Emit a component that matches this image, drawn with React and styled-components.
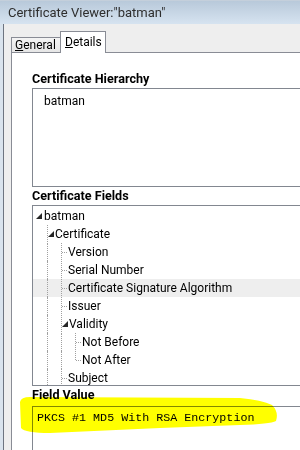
import React from "react";
import styled, { createGlobalStyle } from "styled-components";

const GlobalStyle = createGlobalStyle`
  html, body {
    margin: 0;
    padding: 0;
  }
  body {
    width: 300px;
    height: 450px;
    overflow: hidden;
    background: #eeeeee;
    font-family: Roboto, "Liberation Sans", sans-serif;
    color: #000;
  }
`;

const Window = styled.div`
  position: relative;
  width: 300px;
  height: 450px;
  overflow: hidden;
  display: flex;
  flex-direction: column;
`;

const TitleBar = styled.div`
  height: 23px;
  border-top: 1px solid #c4cfdb;
  background: linear-gradient(#b8c9da, #d6e3f0);
  padding-left: 8px;
  display: flex;
  align-items: center;
  font-size: 13px;
  color: #2e2e2e;
  white-space: nowrap;
`;

const Frame = styled.div`
  flex: 1;
  display: flex;
  background: #d9e3ed;
  padding-left: 3px;
`;

const Body = styled.div`
  flex: 1;
  display: flex;
  flex-direction: column;
  background: #eeeeee;
  border-left: 1px solid #6d7480;
  padding: 7px 0 0 7px;
`;

const TabRow = styled.div`
  display: flex;
  align-items: flex-end;
  height: 22px;
  margin-bottom: -1px;
  position: relative;
  z-index: 1;
`;

const Tab = styled.div`
  box-sizing: border-box;
  height: ${(p) => (p.$active ? 22 : 15)}px;
  margin-bottom: ${(p) => (p.$active ? 0 : 1)}px;
  margin-left: ${(p) => (p.$active ? -1 : 0)}px;
  width: ${(p) => p.$width}px;
  border: 1px solid #898c95;
  border-bottom: none;
  background: ${(p) =>
    p.$active ? "#ffffff" : "linear-gradient(#f4f4f4, #e6e6e6)"};
  padding-left: ${(p) => (p.$active ? 4 : 3)}px;
  font-size: 12px;
  line-height: ${(p) => (p.$active ? 21 : 15)}px;
  white-space: nowrap;
`;

const Panel = styled.div`
  flex: 1;
  width: 320px;
  background: #ffffff;
  border-top: 1px solid #898c95;
  border-left: 1px solid #898c95;
  padding: 17px 0 0 20px;
  display: flex;
  flex-direction: column;
`;

const Heading = styled.div`
  height: 18px;
  line-height: 18px;
  font-size: 12.6px;
  font-weight: 700;
  white-space: nowrap;
`;

const ListBox = styled.div`
  width: 300px;
  height: ${(p) => p.$height}px;
  border: 1px solid #828790;
  border-right: none;
  overflow: hidden;
  padding-top: ${(p) => p.$padTop || 0}px;
`;

const PlainItem = styled.div`
  padding-left: 11px;
  font-size: 12px;
  line-height: 18px;
`;

const TreeRow = styled.div`
  display: flex;
  align-items: center;
  height: 18px;
  padding-left: ${(p) => (p.$level === 0 ? 3 : 14)}px;
  background: ${(p) => (p.$selected ? "#eeeeee" : "transparent")};
  font-size: 12px;
  white-space: nowrap;
`;

const Guide = styled.div`
  width: 13px;
  height: 18px;
  border-left: 1px dotted #a0a0a0;
`;

const Label = styled.span`
  line-height: 18px;
`;

const ValueBox = styled.div`
  flex: 1;
  width: 300px;
  margin-top: 2px;
  border-top: 1px solid #828790;
  border-left: 1px solid #828790;
  padding: 2px 0 0 4px;
  font-family: "Liberation Mono", "Courier New", monospace;
  font-size: 11.7px;
  line-height: 18px;
  white-space: nowrap;
`;

const Highlighter = styled.svg`
  position: absolute;
  left: 0;
  top: 390px;
  width: 300px;
  height: 50px;
  mix-blend-mode: multiply;
  pointer-events: none;
`;

const Connector = ({ leaf, open, last, root }) => (
  <svg width={leaf ? 7 : 8} height="18" style={{ flexShrink: 0 }}>
    {!root && (
      <line
        x1="0.5"
        y1="0"
        x2="0.5"
        y2={last ? 9.5 : 18}
        stroke="#a0a0a0"
        strokeDasharray="1 1"
      />
    )}
    {leaf && (
      <line
        x1="1"
        y1="9.5"
        x2="6"
        y2="9.5"
        stroke="#a0a0a0"
        strokeDasharray="1 1"
      />
    )}
    {open && (
      <polygon
        points={root ? "6,6 6,12 0,12" : "7,6 7,12 1,12"}
        fill="#262626"
      />
    )}
  </svg>
);

const fields = [
  { label: "batman", level: 0, open: true },
  { label: "Certificate", level: 1, open: true },
  { label: "Version", level: 2 },
  { label: "Serial Number", level: 2 },
  { label: "Certificate Signature Algorithm", level: 2, selected: true },
  { label: "Issuer", level: 2 },
  { label: "Validity", level: 2, open: true },
  { label: "Not Before", level: 3 },
  { label: "Not After", level: 3, last: true },
  { label: "Subject", level: 2 },
];

const App = () => {
  return (
    <Window>
      <GlobalStyle />
      <TitleBar>Certificate Viewer:"batman"</TitleBar>
      <Frame>
        <Body>
          <TabRow>
            <Tab $width={50}>
              <u>G</u>eneral
            </Tab>
            <Tab $active $width={46}>
              <u>D</u>etails
            </Tab>
          </TabRow>
          <Panel>
            <Heading>Certificate Hierarchy</Heading>
            <ListBox $height={94} $padTop={3}>
              <PlainItem>batman</PlainItem>
            </ListBox>
            <Heading>Certificate Fields</Heading>
            <ListBox $height={178} $padTop={1}>
              {fields.map((f) => (
                <TreeRow key={f.label} $level={f.level} $selected={f.selected}>
                  {Array.from({ length: Math.max(f.level - 1, 0) }).map(
                    (_, i) => (
                      <Guide key={i} />
                    )
                  )}
                  <Connector
                    leaf={!f.open}
                    open={f.open}
                    last={f.last}
                    root={f.level === 0}
                  />
                  <Label>{f.label}</Label>
                </TreeRow>
              ))}
            </ListBox>
            <Heading>Field Value</Heading>
            <ValueBox>PKCS #1 MD5 With RSA Encryption</ValueBox>
          </Panel>
        </Body>
      </Frame>
      <Highlighter viewBox="0 0 300 50">
        <path
          d="M20,12 Q21,7 30,7 L240,8 Q262,10 272,15 Q279,22 276,31 Q270,34 240,35 L160,38 L50,43 Q25,43 21,38 Z"
          fill="#ffff00"
        />
      </Highlighter>
    </Window>
  );
};

export default App;
